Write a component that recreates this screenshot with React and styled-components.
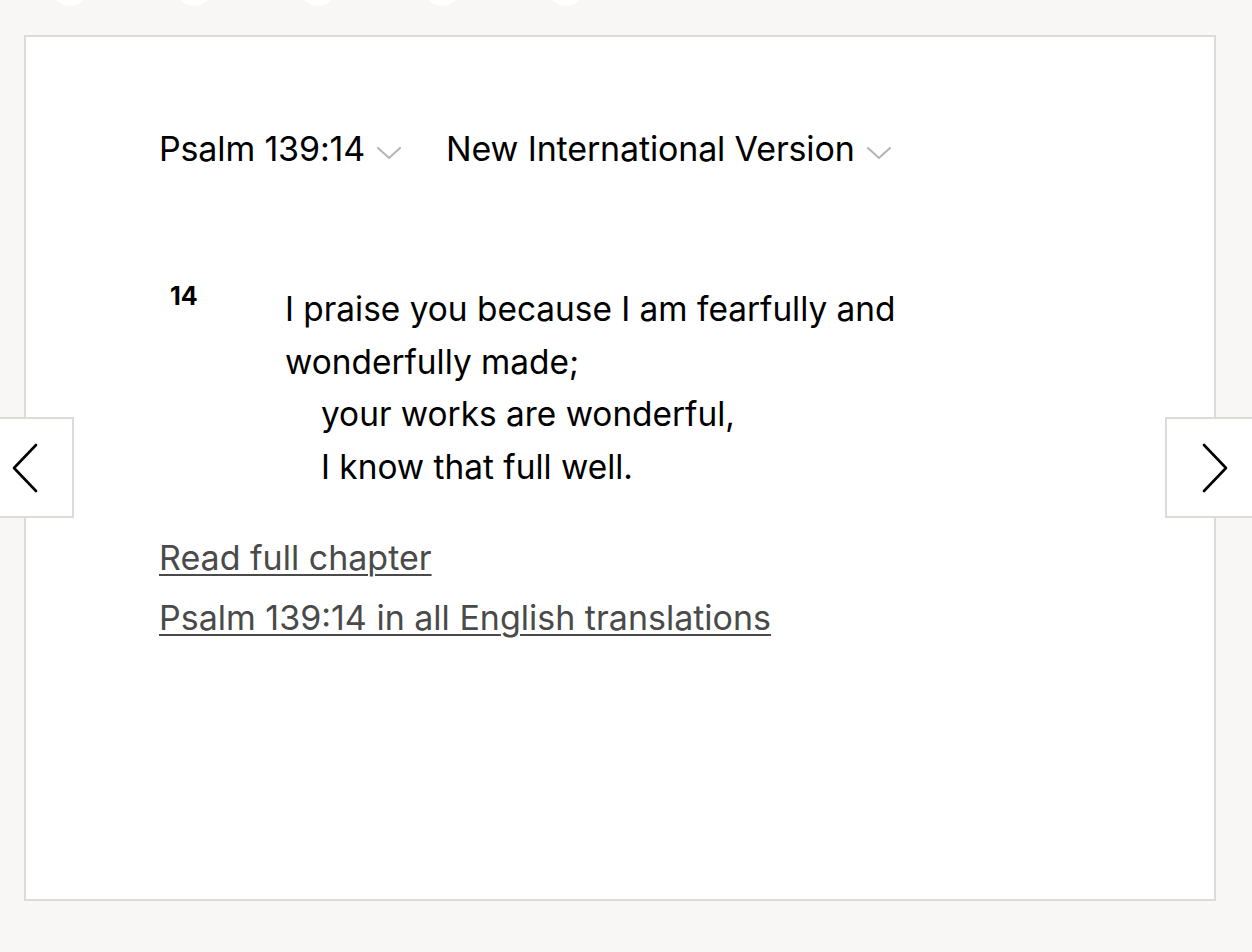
import React from "react";
import styled, { createGlobalStyle } from "styled-components";

const Global = createGlobalStyle`
  html, body {
    margin: 0;
    padding: 0;
    background: #f8f7f5;
    overflow: hidden;
  }
  body {
    font-family: 'Inter', 'Liberation Sans', sans-serif;
    color: #000;
  }
`;

const Page = styled.div`
  position: relative;
  width: 1252px;
  height: 952px;
  overflow: hidden;
`;

const Dots = styled.div`
  display: flex;
  gap: 86px;
  margin-top: -32px;
  padding-left: 51px;
  height: 37px;
`;

const Dot = styled.span`
  width: 38px;
  height: 38px;
  border-radius: 50%;
  background: #ffffff;
  flex: none;
`;

const Card = styled.section`
  box-sizing: border-box;
  margin: 30px 0 0 24px;
  width: 1192px;
  height: 866px;
  background: #fff;
  border: 2px solid #dcdbd8;
  padding: 92px 0 0 133px;
`;

const Selectors = styled.div`
  display: flex;
  align-items: center;
  gap: 44px;
`;

const Select = styled.div`
  display: flex;
  align-items: center;
  gap: 11px;
  font-size: 34px;
  letter-spacing: -0.15px;
  line-height: 40px;
`;

const Caret = styled.svg`
  width: 26px;
  height: 14px;
  margin-top: 8px;
`;

const Verse = styled.div`
  display: grid;
  grid-template-columns: 115px 680px;
  margin-top: 114px;
  padding-left: 11px;
`;

const VerseNum = styled.sup`
  font-size: 25px;
  font-weight: 700;
  line-height: 1;
  vertical-align: top;
  padding-top: 1px;
`;

const Lines = styled.div`
  font-size: 33.4px;
  line-height: 52.5px;
`;

const Line = styled.div`
  padding-left: ${p => (p.indent ? "36px" : "0")};
`;

const Links = styled.div`
  display: flex;
  flex-direction: column;
  align-items: flex-start;
  gap: 22px;
  margin-top: 46px;
`;

const Link = styled.a`
  font-size: 34px;
  color: #4a4a4a;
  text-decoration: underline;
  text-decoration-thickness: 2px;
  text-underline-offset: 4px;
  line-height: 38px;
`;

const NavButton = styled.button`
  position: absolute;
  top: 417px;
  width: 76px;
  height: 101px;
  background: #fff;
  border: 2px solid #dcdbd8;
  padding: 0;
  display: flex;
  align-items: center;
  justify-content: flex-start;
  ${p => (p.side === "left" ? "left: -2px; padding-left: 12px;" : "left: 1165px; padding-left: 35px; width: 100px;")}
`;

const Chev = ({ dir }) => (
  <svg width="26" height="50" viewBox="0 0 26 50" fill="none" stroke="#000" strokeWidth="2.6" strokeLinecap="round" strokeLinejoin="round">
    {dir === "left" ? <path d="M24 2 L2 25 L24 48" /> : <path d="M2 2 L24 25 L2 48" />}
  </svg>
);

const Down = () => (
  <Caret viewBox="0 0 26 14" fill="none" stroke="#b3b3b3" strokeWidth="2" strokeLinecap="round">
    <path d="M2 2 L13 12 L24 2" />
  </Caret>
);

export default function App() {
  return (
    <Page>
      <Global />
      <Dots>
        {[0, 1, 2, 3, 4].map(i => <Dot key={i} />)}
      </Dots>
      <Card>
        <Selectors>
          <Select>Psalm 139:14 <Down /></Select>
          <Select>New International Version <Down /></Select>
        </Selectors>
        <Verse>
          <VerseNum>14</VerseNum>
          <Lines>
            <Line>I praise you because I am fearfully and</Line>
            <Line>wonderfully made;</Line>
            <Line indent>your works are wonderful,</Line>
            <Line indent>I know that full well.</Line>
          </Lines>
        </Verse>
        <Links>
          <Link href="#">Read full chapter</Link>
          <Link href="#">Psalm 139:14 in all English translations</Link>
        </Links>
      </Card>
      <NavButton side="left" aria-label="previous"><Chev dir="left" /></NavButton>
      <NavButton side="right" aria-label="next"><Chev dir="right" /></NavButton>
    </Page>
  );
}
